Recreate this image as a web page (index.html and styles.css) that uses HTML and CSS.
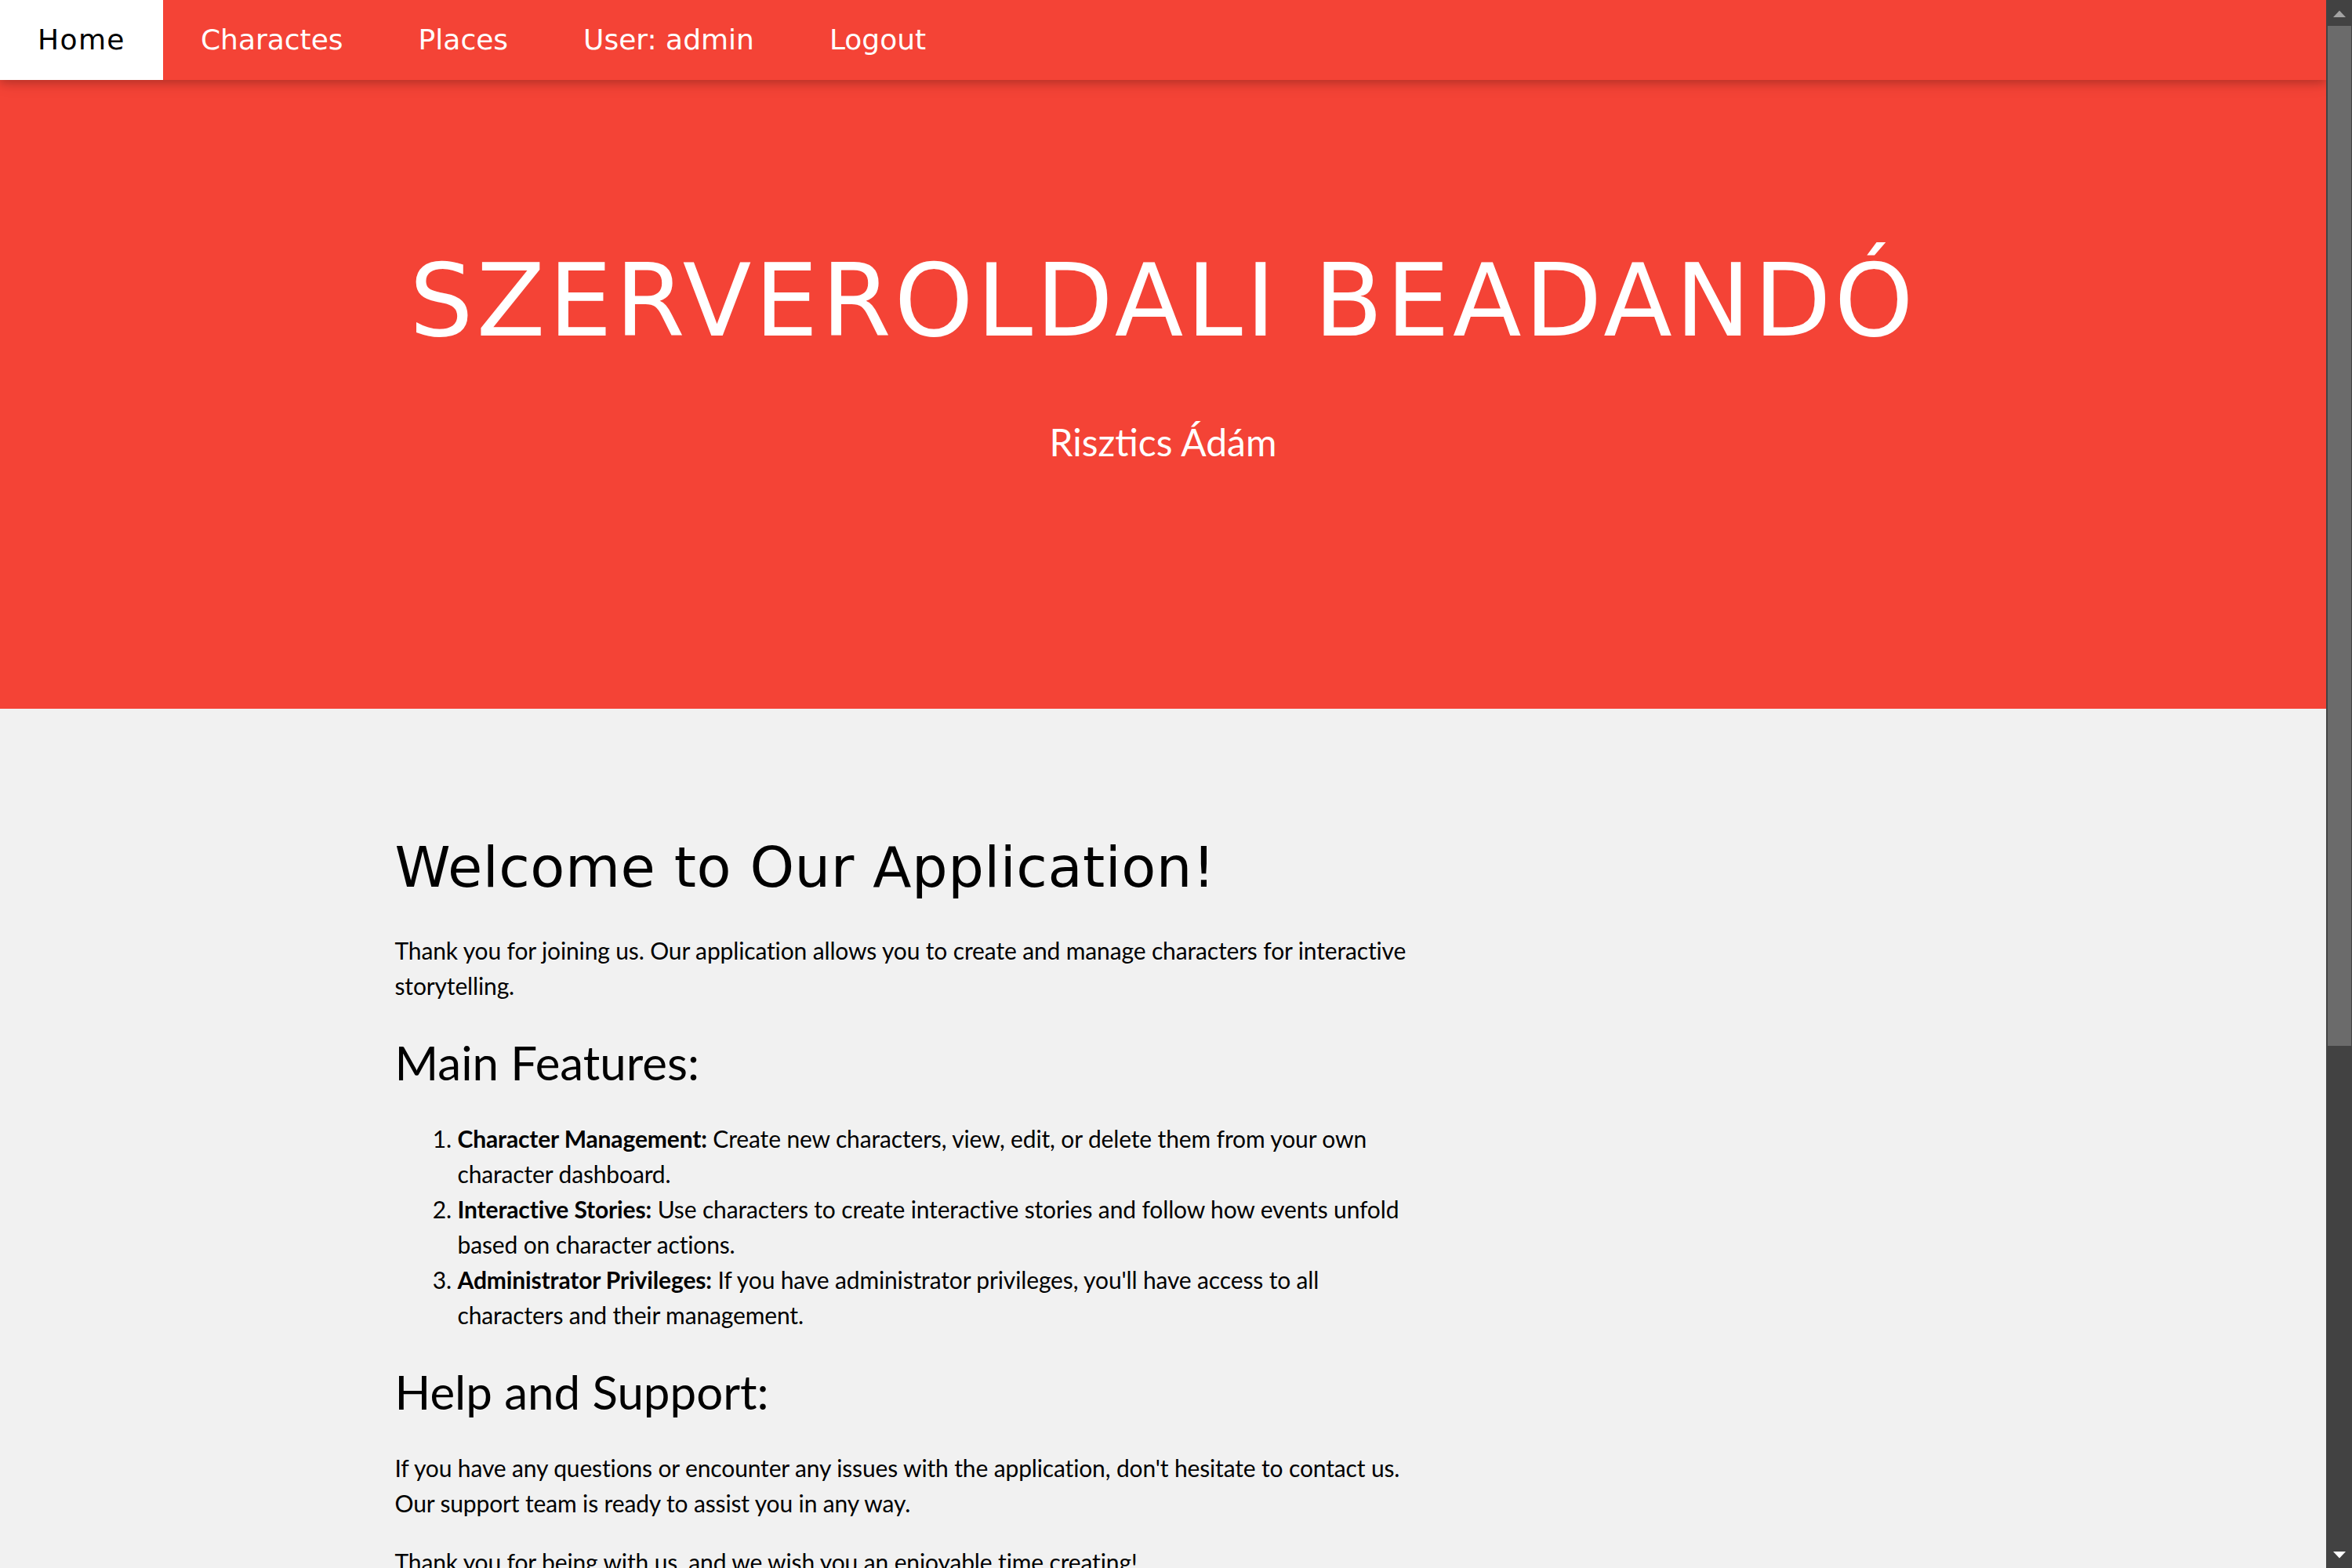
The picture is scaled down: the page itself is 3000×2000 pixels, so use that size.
FILE: index.html
```html
<!DOCTYPE html>
<html lang="hu">
<head>
<meta charset="utf-8">
<title>Szerveroldali beadandó</title>
<link rel="stylesheet" href="styles.css">
</head>
<body>
<div class="page">
  <nav class="topbar">
    <a class="nav-item nav-active" href="#">Home</a>
    <a class="nav-item" href="#">Charactes</a>
    <a class="nav-item" href="#">Places</a>
    <a class="nav-item" href="#">User: admin</a>
    <a class="nav-item" href="#">Logout</a>
  </nav>
  <header class="hero">
    <h1 class="hero-title">SZERVEROLDALI BEADANDÓ</h1>
    <p class="hero-sub">Risztics Ádám</p>
  </header>
  <section class="main">
    <div class="content">
      <div class="col">
        <h1 class="welcome">Welcome to Our Application!</h1>
        <p>Thank you for joining us. Our application allows you to create and manage characters for interactive storytelling.</p>
        <h2>Main Features:</h2>
        <ol>
          <li><strong>Character Management:</strong> Create new characters, view, edit, or delete them from your own character dashboard.</li>
          <li><strong>Interactive Stories:</strong> Use characters to create interactive stories and follow how events unfold based on character actions.</li>
          <li><strong>Administrator Privileges:</strong> If you have administrator privileges, you'll have access to all characters and their management.</li>
        </ol>
        <h2>Help and Support:</h2>
        <p>If you have any questions or encounter any issues with the application, don't hesitate to contact us. Our support team is ready to assist you in any way.</p>
        <p>Thank you for being with us, and we wish you an enjoyable time creating!</p>
      </div>
    </div>
  </section>
</div>
<div class="scrollbar" aria-hidden="true">
  <div class="sb-btn">
    <svg width="33" height="33" viewBox="0 0 33 33"><polygon points="9,22 25,22 17,13.5" fill="#a3a3a3"/></svg>
  </div>
  <div class="sb-track"><div class="sb-thumb"></div></div>
  <div class="sb-btn">
    <svg width="33" height="33" viewBox="0 0 33 33"><polygon points="9,12 25,12 17,20.5" fill="#ffffff"/></svg>
  </div>
</div>
</body>
</html>
```

FILE: styles.css
```css
html {
  background: #f1f1f1;
}

body {
  margin: 0;
  height: 100vh;
  display: flex;
  overflow: hidden;
  background: #f1f1f1;
  color: #000;
  font-family: "Lato", "Open Sans", sans-serif;
  font-size: 30px;
  line-height: 1.5;
}

.page {
  flex: 1 1 auto;
  min-width: 0;
  height: 100vh;
  overflow: hidden;
}

/* ---------- fake viewport scrollbar ---------- */
.scrollbar {
  flex: 0 0 33px;
  height: 100vh;
  display: flex;
  flex-direction: column;
  background: #424242;
}

.sb-btn {
  height: 33px;
  flex: 0 0 33px;
}

.sb-btn svg {
  display: block;
}

.sb-track {
  flex: 1 1 auto;
  padding: 0 1px 0 2px;
}

.sb-thumb {
  height: 1301px;
  background: #6b6b6b;
}

/* ---------- top bar ---------- */
.topbar {
  position: relative;
  z-index: 1;
  display: flex;
  background: #f44336;
  box-shadow: 0 4px 10px 0 rgba(0, 0, 0, 0.16), 0 4px 20px 0 rgba(0, 0, 0, 0.12);
}

.nav-item {
  display: block;
  padding: 24px 48px;
  font-family: "DejaVu Sans", "Liberation Sans", sans-serif;
  font-size: 36px;
  line-height: 54px;
  color: #fff;
  text-decoration: none;
  white-space: nowrap;
}

.nav-active {
  background: #fff;
  color: #000;
  letter-spacing: 1.4px;
}

/* ---------- hero ---------- */
.hero {
  background: #f44336;
  color: #fff;
  text-align: center;
  padding: 154px 32px 256px;
}

.hero-title {
  margin: 32px 0;
  font-family: "DejaVu Sans", "Liberation Sans", sans-serif;
  font-weight: 400;
  font-size: 128px;
  line-height: 192px;
  letter-spacing: 4.2px;
}

.hero-sub {
  margin: 48px 0;
  font-size: 48px;
  line-height: 72px;
}

/* ---------- main content ---------- */
.main {
  padding: 128px 32px;
}

.content {
  max-width: 1960px;
  margin: 0 auto;
}

.col {
  width: 66.6667%;
  display: flow-root;
}

.welcome {
  margin: 20px 0;
  font-family: "DejaVu Sans", "Liberation Sans", sans-serif;
  font-weight: 400;
  font-size: 72px;
  line-height: 108px;
  letter-spacing: 0.5px;
}

.col p,
.col li {
  letter-spacing: -0.14px;
}

.col p {
  margin: 30px 0;
}

.col h2 {
  margin: 20px 0;
  font-weight: 400;
  font-size: 60px;
  line-height: 90px;
}

.col ol {
  margin: 30px 0;
  padding-left: 80px;
}

.col strong {
  font-weight: 700;
}
```
